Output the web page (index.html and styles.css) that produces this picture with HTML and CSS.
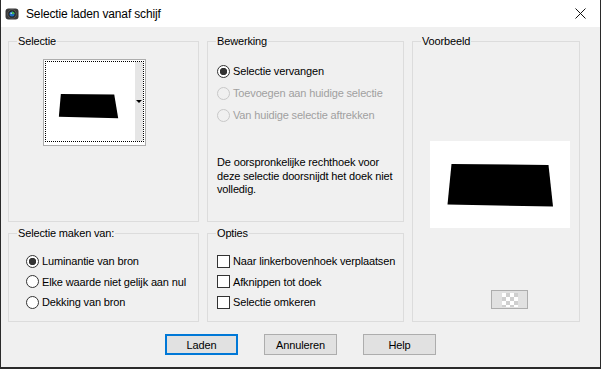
FILE: index.html
```html
<!DOCTYPE html>
<html lang="nl">
<head>
  <meta charset="UTF-8" />
  <title>Selectie laden vanaf schijf</title>
  <link rel="stylesheet" href="styles.css">
</head>
<body>

  <div class="window">
    <div class="titlebar">
      <svg class="app-icon" width="14" height="14" viewBox="0 0 14 14">
        <rect x="0.5" y="1.5" width="13" height="11" rx="3" fill="#3a3a3a"/>
        <circle cx="7" cy="7" r="4.2" fill="#1b1b1b" stroke="#6a6a6a" stroke-width="0.8"/>
        <circle cx="7" cy="7" r="2.6" fill="#1f6fc0"/>
        <path d="M7 4.4 A2.6 2.6 0 0 1 9.6 7 L7 7 Z" fill="#3fb34f"/>
        <circle cx="6.2" cy="6.2" r="0.8" fill="#bfe3ff"/>
      </svg>
      <span class="title">Selectie laden vanaf schijf</span>
      <svg class="close" width="11" height="11" viewBox="0 0 11 11">
        <path d="M0.5 0.5 L10.5 10.5 M10.5 0.5 L0.5 10.5" stroke="#111" stroke-width="1"/>
      </svg>
    </div>

    <div class="content">
      <div class="groups">

        <fieldset class="group group-selectie">
          <legend>Selectie</legend>
          <div class="thumb">
            <div class="thumb-inner">
              <svg width="90" height="79" viewBox="0 0 90 79">
                <polygon points="15,32 69,32.5 73,56.5 13,55" fill="#000"/>
              </svg>
              <div class="thumb-strip"><span class="arrow"></span></div>
            </div>
          </div>
        </fieldset>

        <fieldset class="group group-bewerking">
          <legend>Bewerking</legend>
          <label class="option"><input type="radio" name="bew" checked> Selectie vervangen</label>
          <label class="option disabled"><input type="radio" name="bew" disabled> Toevoegen aan huidige selectie</label>
          <label class="option disabled"><input type="radio" name="bew" disabled> Van huidige selectie aftrekken</label>
          <p class="note">De oorspronkelijke rechthoek voor deze selectie doorsnijdt het doek niet volledig.</p>
        </fieldset>

        <fieldset class="group group-voorbeeld">
          <legend>Voorbeeld</legend>
          <div class="preview">
            <svg width="140" height="87" viewBox="0 0 140 87">
              <polygon points="21.5,23 118.5,24 123,65.5 17.5,63.5" fill="#000"/>
            </svg>
          </div>
          <div class="checker-btn"><span class="checker"></span></div>
        </fieldset>

        <fieldset class="group group-maken">
          <legend>Selectie maken van:</legend>
          <label class="option"><input type="radio" name="bron" checked> Luminantie van bron</label>
          <label class="option"><input type="radio" name="bron"> Elke waarde niet gelijk aan nul</label>
          <label class="option"><input type="radio" name="bron"> Dekking van bron</label>
        </fieldset>

        <fieldset class="group group-opties">
          <legend>Opties</legend>
          <label class="option"><input type="checkbox"> Naar linkerbovenhoek verplaatsen</label>
          <label class="option"><input type="checkbox"> Afknippen tot doek</label>
          <label class="option"><input type="checkbox"> Selectie omkeren</label>
        </fieldset>

      </div>

      <div class="buttons">
        <button class="btn default">Laden</button>
        <button class="btn">Annuleren</button>
        <button class="btn">Help</button>
      </div>
    </div>
  </div>

</body>
</html>
```

FILE: styles.css
```css
body {
  margin: 0;
  font-family: 'Liberation Sans', Arial, sans-serif;
  font-size: 11px;
  letter-spacing: -0.15px;
  color: #000;
  background-color: #f0f0f0;
}
.window {
  width: 601px;
  height: 369px;
  box-sizing: border-box;
  border-left: 1px solid #2a2a2a;
  border-right: 1px solid #2a2a2a;
  border-bottom: 2px solid #2a2a2a;
  background-color: #f0f0f0;
}
.titlebar {
  height: 27px;
  background-color: #fff;
  display: flex;
  align-items: center;
  padding-left: 4px;
}
.app-icon {
  margin-right: 7px;
}
.title {
  font-size: 12px;
  flex: 1;
}
.close {
  margin-right: 14px;
}
.content {
  padding: 8px 0 0 7px;
}
.groups {
  display: grid;
  grid-template-columns: 191px 197px 168px;
  grid-template-rows: 187px 95px;
  column-gap: 8px;
  row-gap: 5px;
}
.group {
  margin: 0;
  padding: 0 0 0 9px;
  min-width: 0;
  border: 1px solid #dcdcdc;
}
.group legend {
  padding: 0 1px;
  margin-left: -1px;
  line-height: 13px;
}
.group-voorbeeld {
  grid-column: 3;
  grid-row: 1 / 3;
}
.group-maken {
  grid-column: 1;
  grid-row: 2;
  padding-top: 11px;
}
.group-maken .option {
  margin-left: 8px;
}
.group-opties {
  grid-column: 2;
  grid-row: 2;
  padding-top: 11px;
}
.group-bewerking {
  padding-top: 12px;
}

/* thumbnail in Selectie */
.thumb {
  margin: 11px 0 0 25px;
  width: 99px;
  height: 83px;
  border: 1px solid #adadad;
  background-color: #fff;
  padding: 1px;
}
.thumb-inner {
  height: 79px;
  border: 1px dotted #000;
  display: flex;
}
.thumb-inner svg {
  flex: 1;
}
.thumb-strip {
  width: 8px;
  background-color: #e6e6e6;
  display: flex;
  align-items: center;
  justify-content: center;
}
.arrow {
  width: 0;
  height: 0;
  border-left: 3px solid transparent;
  border-right: 3px solid transparent;
  border-top: 3px solid #000;
}

/* radio and checkbox rows */
.option {
  display: flex;
  align-items: center;
  height: 22px;
  white-space: nowrap;
}
.group-maken .option,
.group-opties .option {
  height: 20.5px;
}
.option input {
  appearance: none;
  -webkit-appearance: none;
  margin: 0 3px 0 0;
  width: 13px;
  height: 13px;
  box-sizing: border-box;
  border: 1px solid #333;
  background-color: #fff;
}
.option input[type=radio] {
  border-radius: 50%;
}
.option input[type=radio]:checked {
  background: radial-gradient(circle, #333 3.4px, #fff 4px);
}
.option.disabled {
  color: #a0a0a0;
}
.option.disabled input {
  border-color: #c8c8c8;
  background-color: #f0f0f0;
}
.note {
  margin: 30px 0 0 0;
  line-height: 13.5px;
  width: 185px;
}

/* Voorbeeld */
.preview {
  margin: 93px 0 0 8px;
  width: 140px;
  height: 87px;
  background-color: #fff;
}
.preview svg {
  display: block;
}
.checker-btn {
  margin: 62px 0 0 69px;
  width: 37px;
  height: 19px;
  box-sizing: border-box;
  border: 1px solid #adadad;
  background-color: #e1e1e1;
  display: flex;
  align-items: center;
  justify-content: center;
}
.checker {
  width: 16px;
  height: 14px;
  background-color: #fff;
  background-image:
    linear-gradient(45deg, #cfcfcf 25%, transparent 25%, transparent 75%, #cfcfcf 75%),
    linear-gradient(45deg, #cfcfcf 25%, transparent 25%, transparent 75%, #cfcfcf 75%);
  background-size: 8px 8px;
  background-position: 0 0, 4px 4px;
}

/* buttons */
.buttons {
  display: flex;
  justify-content: center;
  gap: 26px;
  margin-top: 12px;
  margin-left: -7px;
}
.btn {
  width: 73px;
  height: 21px;
  box-sizing: border-box;
  border: 1px solid #adadad;
  background-color: #e1e1e1;
  font-family: 'Liberation Sans', Arial, sans-serif;
  font-size: 11px;
  letter-spacing: -0.15px;
  color: #000;
  padding: 0;
}
.btn.default {
  border: 2px solid #0078d7;
}
```
